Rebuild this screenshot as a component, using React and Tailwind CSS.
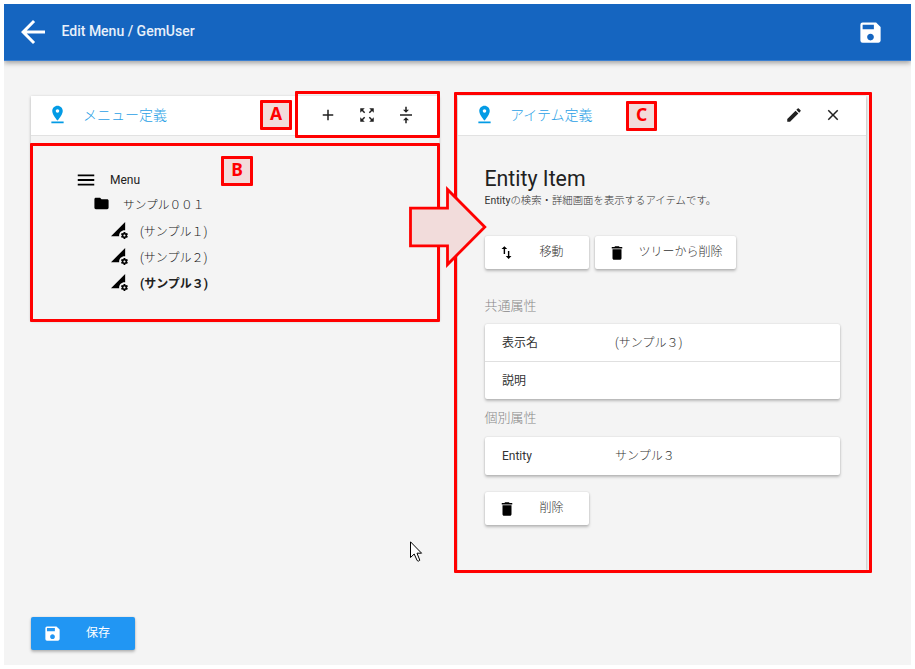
import React from "react";
import {
  MdAdd,
  MdArrowBack,
  MdClose,
  MdDelete,
  MdEdit,
  MdFolder,
  MdMenu,
  MdPermDataSetting,
  MdPinDrop,
  MdSave,
  MdSwapVert,
  MdVerticalAlignCenter,
  MdZoomOutMap,
} from "react-icons/md";

const raised = "shadow-[0_2px_3px_rgba(0,0,0,0.24),0_0_2px_rgba(0,0,0,0.14)]";

function PanelHeader({ title, children }) {
  return (
    <div className="flex h-[40px] items-center border-b border-[#e2e2e2] bg-white pl-[16px]">
      <MdPinDrop className="mb-[2px] h-[21px] w-[21px] text-[#039be5]" />
      <h2 className="ml-[15px] text-[14px] font-light text-[#2b9fe6]">{title}</h2>
      <div className="mb-px ml-auto flex items-center gap-[21px] text-[#212121]">{children}</div>
    </div>
  );
}

function TreeRow({ icon, label, className, textClassName }) {
  return (
    <li className={"flex h-[26px] items-center " + className}>
      {icon}
      <span className={"whitespace-nowrap " + textClassName}>{label}</span>
    </li>
  );
}

function CardButton({ icon, label, className }) {
  return (
    <button className={"flex h-[33px] items-center rounded-[2px] bg-white pl-[13px] " + raised + " " + className}>
      {icon}
      <span className="mb-px whitespace-nowrap text-[12px] font-light text-[#333]">{label}</span>
    </button>
  );
}

function Field({ label, value }) {
  return (
    <div className="flex h-[37px] items-center pl-[17.5px] text-[12px] text-[#333]">
      <span className="w-[113px]">{label}</span>
      <span className="font-light">{value}</span>
    </div>
  );
}

function Marker({ className, children }) {
  return (
    <div
      className={
        "absolute flex h-[30px] justify-center rounded-[1px] border-[3px] border-[#ff0000] bg-[#f2dcdb] font-['Noto_Sans',sans-serif] text-[17.5px] leading-[21px] font-bold text-[#ff0000] " +
        className
      }
    >
      {children}
    </div>
  );
}

export default function App() {
  return (
    <div className="relative h-[669px] w-[915px] overflow-hidden bg-white p-1 font-[Roboto,'Noto_Sans_CJK_JP',sans-serif]">
      <div className="flex h-[661px] flex-col overflow-hidden bg-[#f4f4f4]">
        <header className="flex h-[57px] shrink-0 items-center border-b border-[#3b7fd0] bg-[#1565c0] pr-[27px] pl-[11px] text-white shadow-[0_2px_5px_rgba(0,0,0,0.35)]">
          <MdArrowBack className="mb-px h-9 w-9" />
          <h1 className="mb-px ml-[10.5px] text-[14px] font-medium text-[#e8f0fa]">Edit Menu / GemUser</h1>
          <MdSave className="ml-auto h-[27px] w-[27px]" />
        </header>

        <main className="mt-[35px] flex h-[474px] shrink-0 items-start gap-[19px] pl-[27px]">
          <section className="h-[224px] w-[408px] shadow-[0_1px_3px_rgba(0,0,0,0.28)]">
            <PanelHeader title="メニュー定義">
              <MdAdd className="h-[18px] w-[18px]" />
              <MdZoomOutMap className="h-[18px] w-[18px]" />
              <MdVerticalAlignCenter className="mr-[24px] h-[18px] w-[18px]" />
            </PanelHeader>
            <ul className="pt-[31px] text-[12px] text-[#212121]">
              <TreeRow
                className="pl-[44px]"
                icon={<MdMenu className="h-[22px] w-[22px] text-black" />}
                label="Menu"
                textClassName="ml-[13px]"
              />
              <TreeRow
                className="pl-[62px]"
                icon={<MdFolder className="mb-[5px] h-[17px] w-[17px] text-black" />}
                label="サンプル００１"
                textClassName="ml-[13px] text-[11.7px] font-light"
              />
              <TreeRow
                className="pl-[80px]"
                icon={<MdPermDataSetting className="mb-[4px] h-[17px] w-[17px] text-black" />}
                label="(サンプル１)"
                textClassName="ml-[12px] font-light"
              />
              <TreeRow
                className="pl-[80px]"
                icon={<MdPermDataSetting className="mb-[4px] h-[17px] w-[17px] text-black" />}
                label="(サンプル２)"
                textClassName="ml-[12px] font-light"
              />
              <TreeRow
                className="pl-[80px]"
                icon={<MdPermDataSetting className="mb-[4px] h-[17px] w-[17px] text-black" />}
                label="(サンプル３)"
                textClassName="ml-[12px] font-bold"
              />
            </ul>
          </section>

          <section className="h-[474px] w-[408px] shadow-[0_1px_3px_rgba(0,0,0,0.35)]">
            <PanelHeader title="アイテム定義">
              <MdEdit className="h-[18px] w-[18px]" />
              <MdClose className="mr-[24px] h-[18px] w-[18px]" />
            </PanelHeader>
            <div className="pt-[30px] pr-[26px] pl-[26.5px]">
              <h3 className="text-[21.3px] leading-[26px] text-[#212121]">Entity Item</h3>
              <p className="text-[10.4px] leading-[18px] whitespace-nowrap text-[#333]">
                <span>Entity</span>
                <span className="font-light">の検索・詳細画面を表示するアイテムです。</span>
              </p>
              <div className="mt-[26px] flex gap-[6px]">
                <CardButton
                  className="w-[104px]"
                  icon={<MdSwapVert className="mr-[25px] h-[17px] w-[17px] text-black" />}
                  label="移動"
                />
                <CardButton
                  className="w-[141px]"
                  icon={<MdDelete className="mr-[13px] h-[18px] w-[18px] text-black" />}
                  label="ツリーから削除"
                />
              </div>
              <h4 className="mt-[27px] text-[13px] leading-5 font-light text-[#888]">共通属性</h4>
              <div className={"mt-[8px] divide-y divide-[#e0e0e0] rounded-[2px] bg-white pt-px " + raised}>
                <Field label="表示名" value="(サンプル３)" />
                <Field label="説明" value="" />
              </div>
              <h4 className="mt-[9px] text-[13px] leading-5 font-light text-[#888]">個別属性</h4>
              <div className={"mt-[9px] rounded-[2px] bg-white pb-px " + raised}>
                <Field label="Entity" value="サンプル３" />
              </div>
              <CardButton
                className="mt-[17px] w-[104px]"
                icon={<MdDelete className="mr-[24px] h-[18px] w-[18px] text-black" />}
                label="削除"
              />
            </div>
          </section>
        </main>

        <button
          className={
            "mt-[47px] ml-[27px] flex h-[33px] w-[104px] shrink-0 items-center rounded-[2px] bg-[#2196f3] pl-[12px] text-white " +
            raised
          }
        >
          <MdSave className="mb-px h-[19px] w-[19px]" />
          <span className="mb-px ml-[24px] text-[12px]">保存</span>
        </button>
      </div>

      {/* Annotation frames and callouts */}
      <div className="absolute top-[91px] left-[295px] h-[47px] w-[145px] rounded-[1px] border-[3px] border-[#ff0000]" />
      <div className="absolute top-[143px] left-[30px] h-[179px] w-[410px] rounded-[1px] border-[3px] border-[#ff0000]" />
      <div className="absolute top-[92px] left-[454px] h-[481px] w-[418px] rounded-[1px] border-[3px] border-[#ff0000]" />
      <Marker className="top-[100px] left-[260px] w-[32px]">A</Marker>
      <Marker className="top-[156px] left-[221px] w-[32px]">B</Marker>
      <Marker className="top-[101px] left-[626px] w-[31px]">C</Marker>

      <svg className="absolute top-[184px] left-[406px]" width="84" height="86" viewBox="406 184 84 86">
        <path
          d="M410.5 208.2H447.5V189.5L484.8 227L447.5 264.5V245.8H410.5Z"
          fill="#f2dcdb"
          stroke="#ff0000"
          strokeWidth="2.8"
        />
      </svg>

      <svg className="absolute top-[541px] left-[410px]" width="13" height="22" viewBox="0 0 13 22">
        <path
          d="M0.5 0.8V16.5L4.2 13L7.2 19.6Q8.5 20.8 9.8 19.2L7 12.2H11.6Z"
          fill="#fff"
          stroke="#000"
          strokeWidth="1"
        />
      </svg>
    </div>
  );
}
